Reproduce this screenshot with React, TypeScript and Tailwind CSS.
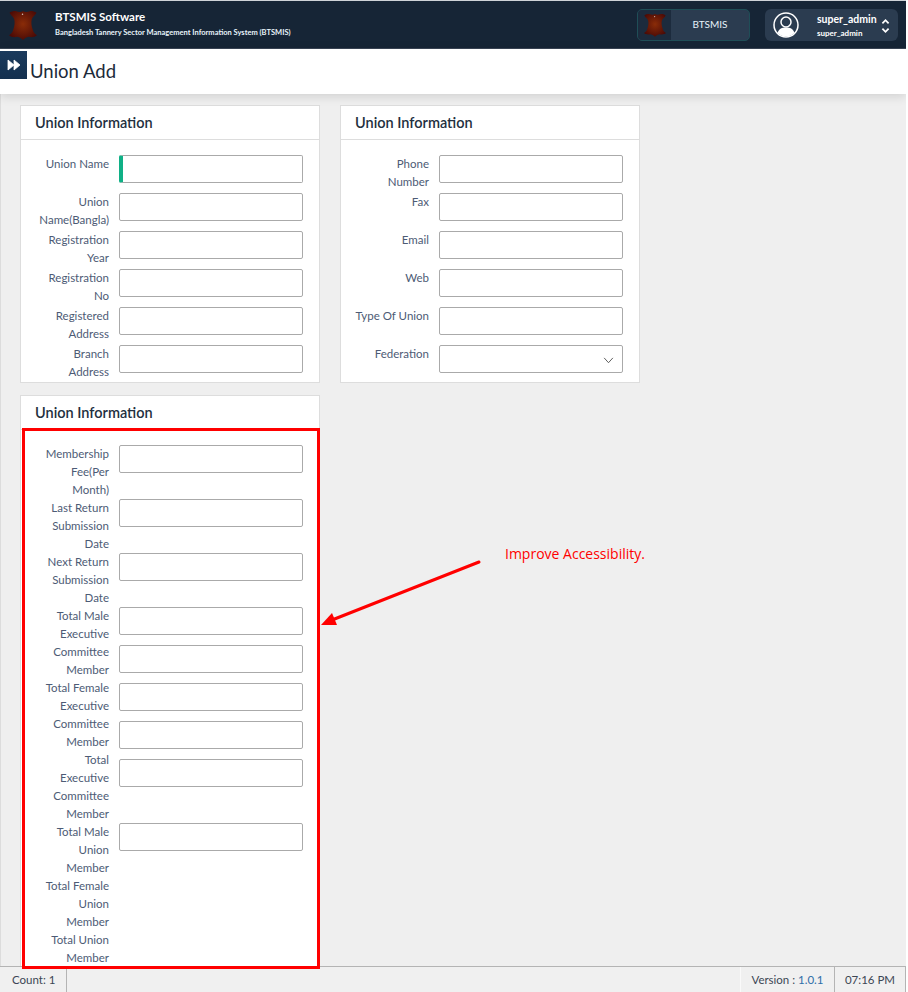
import React from "react";

const font = { fontFamily: 'Lato, "Noto Sans", sans-serif' };

const firstCard = ["Union Name", "Union\nName(Bangla)", "Registration\nYear", "Registration\nNo", "Registered\nAddress", "Branch\nAddress"];
const secondCard = ["Phone\nNumber", "Fax", "Email", "Web", "Type Of Union"];

const thirdLabels = [
    "Membership\nFee(Per\nMonth)",
    "Last Return\nSubmission\nDate",
    "Next Return\nSubmission\nDate",
    "Total Male\nExecutive\nCommittee\nMember",
    "Total Female\nExecutive\nCommittee\nMember",
    "Total\nExecutive\nCommittee\nMember",
    "Total Male\nUnion\nMember",
    "Total Female\nUnion\nMember",
    "Total Union\nMember",
];
const thirdInputs = ["mb-[26px]", "mb-[26px]", "mb-[26px]", "mb-[10px]", "mb-[10px]", "mb-[10px]", "mb-[10px]", "mb-[36px]", "mb-0"];

const HideLogo = ({ className }: { className: string }) => (
    <svg viewBox="0 0 30 32" className={className}>
        <defs>
            <radialGradient id="hide" cx="50%" cy="45%" r="60%">
                <stop offset="0%" stopColor="#8a2c08" />
                <stop offset="100%" stopColor="#4a0a06" />
            </radialGradient>
        </defs>
        <path
            d="M15 1 C17 2.500 20 2 23 1 C25.500 1 28 1.500 29.500 3 C28 6 25.500 7 24.500 9.500 C23.500 13 24 17 25.500 21 C26 24 28 25.500 30 27 C28 29 24 29.500 21 28.500 C18.500 29 16.500 30.500 15 32 C13.500 30.500 11.500 29 9 28.500 C6 29.500 2 29 0 27 C2 25.500 4 24 4.500 21 C6 17 6.500 13 5.500 9.500 C4.500 7 2 6 0.500 3 C2 1.500 4.500 1 7 1 C10 2 13 2.500 15 1 Z"
            fill="url(#hide)"
        />
        <circle cx="14.500" cy="4.500" r="0.800" fill="#d8c8c0" />
    </svg>
);

const TextInput = ({ className = "" }: { className?: string }) => (
    <div className={`h-[28px] w-[184px] shrink-0 rounded-[2px] border border-[#aaaaaa] bg-white ${className}`} />
);

const Row = ({ label, children }: { label: string; children: React.ReactNode }) => (
    <div className="flex h-[38px] gap-[10px] last:h-[37px]">
        <label className="w-[88px] whitespace-pre-line text-right text-[11.500px] leading-[18px] text-[#4d5b75]">{label}</label>
        {children}
    </div>
);

const Card = ({ children }: { children: React.ReactNode }) => (
    <div className="w-[300px] border border-[#dddddd] bg-white">
        <div className="flex h-[34px] items-center border-b border-[#dddddd] pl-[14px] text-[14.500px] font-semibold text-[#232f3e]">
            Union Information
        </div>
        {children}
    </div>
);

export default function App() {
    return (
        <div className="relative flex h-screen w-[906px] flex-col overflow-hidden bg-[#efefef]" style={font}>
            {/* top bar */}
            <header className="flex h-[49px] shrink-0 items-center border-t border-b border-t-[#cfd3d8] border-b-[#3a4656] bg-[#162536] pl-[9px] pr-[8px]">
                <HideLogo className="h-[32px] w-[28px]" />
                <div className="mb-[2px] ml-[18px] flex flex-col text-white">
                    <span className="text-[11.500px] font-bold leading-[15px]">BTSMIS Software</span>
                    <span className="mt-[4px] text-[7.500px] font-bold leading-[10px] text-[#e8f4fb]">
                        Bangladesh Tannery Sector Management Information System (BTSMIS)
                    </span>
                </div>
                <div className="ml-auto flex h-[32px] w-[113px] items-center overflow-hidden rounded-[5px] border border-[#1f4e57] bg-[#2b3c50]">
                    <div className="flex h-full w-[33px] items-center justify-center bg-[#1c2b3d]">
                        <HideLogo className="h-[24px] w-[22px]" />
                    </div>
                    <span className="flex-1 text-center text-[10px] text-[#e6f2fa]">BTSMIS</span>
                </div>
                <div className="ml-[15px] flex h-[32px] w-[133px] items-center rounded-[6px] bg-[#2b3c50] pl-[8px] pr-[8px]">
                    <svg viewBox="0 0 26 26" className="h-[26px] w-[26px]">
                        <circle cx="13" cy="13" r="12" fill="#2b3c50" stroke="#ffffff" strokeWidth="1.500" />
                        <circle cx="13" cy="10" r="5" fill="none" stroke="#ffffff" strokeWidth="1.500" />
                        <path d="M4.500 21 C6 16.500 9 15.500 13 15.500 C17 15.500 20 16.500 21.500 21 C19 23.500 16 24.500 13 24.500 C10 24.500 7 23.500 4.500 21 Z" fill="#ffffff" />
                    </svg>
                    <div className="ml-[18px] mt-[2px] flex flex-col text-white">
                        <span className="text-[10.500px] font-bold leading-[14px]">super_admin</span>
                        <span className="mt-[1px] text-[8px] font-bold leading-[12px]">super_admin</span>
                    </div>
                    <svg viewBox="0 0 10 18" className="ml-auto mt-[2px] h-[16px] w-[9px]" fill="none" stroke="#ffffff" strokeWidth="2">
                        <path d="M1.500 6 L5 2.500 L8.500 6" />
                        <path d="M1.500 12 L5 15.500 L8.500 12" />
                    </svg>
                </div>
            </header>

            {/* page title */}
            <div className="relative z-10 flex h-[45px] shrink-0 items-center bg-white pb-[2px] pl-[30px] shadow-[0_2px_10px_rgba(0,0,0,0.14)]">
                <button className="absolute left-0 top-[2px] flex h-[28px] w-[27px] items-center justify-center bg-gradient-to-b from-[#1a3a5c] to-[#14304f]">
                    <svg viewBox="0 0 14 12" className="h-[12px] w-[14px]" fill="#ffffff" stroke="#ffffff" strokeWidth="0.800" strokeLinejoin="round">
                        <path d="M1 1 L7 6 L1 11 Z" />
                        <path d="M7 1 L13 6 L7 11 Z" />
                    </svg>
                </button>
                <h1 className="text-[18.500px] leading-[28px] text-[#1c2a3a]">Union Add</h1>
            </div>

            {/* cards */}
            <main className="min-h-0 flex-1 overflow-hidden border-l border-[#dcdcdc] pl-[19px] pt-[11px]">
                <div className="grid grid-cols-[300px_300px] items-start gap-x-[20px] gap-y-[12px]">
                    <Card>
                        <div className="pt-[15px]">
                            {firstCard.map((label, i) => (
                                <Row key={label} label={label}>
                                    <TextInput className={i === 0 ? "border-l-[4px] border-l-[#10b086]" : ""} />
                                </Row>
                            ))}
                        </div>
                    </Card>
                    <Card>
                        <div className="pt-[15px]">
                            {secondCard.map((label) => (
                                <Row key={label} label={label}>
                                    <TextInput />
                                </Row>
                            ))}
                            <Row label="Federation">
                                <div className="flex h-[28px] w-[184px] items-center justify-end rounded-[2px] border border-[#aaaaaa] bg-white pr-[8px]">
                                    <svg viewBox="0 0 12 8" className="mt-[2px] h-[7px] w-[11px]" fill="none" stroke="#4a4a4a" strokeWidth="1">
                                        <path d="M1 1 L6 6.500 L11 1" />
                                    </svg>
                                </div>
                            </Row>
                        </div>
                    </Card>
                    <Card>
                        <div className="flex gap-[10px] pt-[15px]">
                            <div className="w-[88px] text-right text-[11.500px] leading-[18px] text-[#4d5b75]">
                                {thirdLabels.map((label) => (
                                    <div key={label} className="whitespace-pre-line">{label}</div>
                                ))}
                            </div>
                            <div>
                                {thirdInputs.map((margin, i) => (
                                    <TextInput key={i} className={margin} />
                                ))}
                            </div>
                        </div>
                    </Card>
                </div>
            </main>

            {/* status bar */}
            <footer className="flex h-[26px] shrink-0 items-center border-t border-[#b4b4b4] bg-[#f0f0f0] text-[11.500px] text-[#3c4654]">
                <span className="flex h-full w-[67px] items-center border-r border-[#b4b4b4] pl-[12px]">Count: 1</span>
                <span className="ml-auto flex h-full w-[95px] items-center justify-center border-r border-l border-r-[#b4b4b4] border-l-[#fafafa]">
                    Version :&nbsp;<span className="text-[#2f6ea8]">1.0.1</span>
                </span>
                <span className="flex h-full w-[71px] items-center justify-center border-r border-[#b4b4b4]">07:16 PM</span>
            </footer>

            {/* review annotation laid over the page */}
            <div className="absolute left-[22px] top-[428px] h-[541px] w-[298px] border-[3px] border-[#ff0000]" />
            <svg className="absolute left-[318px] top-[558px] h-[72px] w-[166px]" viewBox="0 0 166 72" fill="none">
                <path d="M161 4 L14 62" stroke="#ff0000" strokeWidth="3" strokeLinecap="round" />
                <path d="M3 67 L14 55 L19 67 Z" fill="#ff0000" />
            </svg>
            <span className="absolute left-[505px] top-[545px] text-[14px] leading-[18px] text-[#ff0000]" style={{ fontFamily: '"Open Sans", sans-serif' }}>
                Improve Accessibility.
            </span>
        </div>
    );
}
